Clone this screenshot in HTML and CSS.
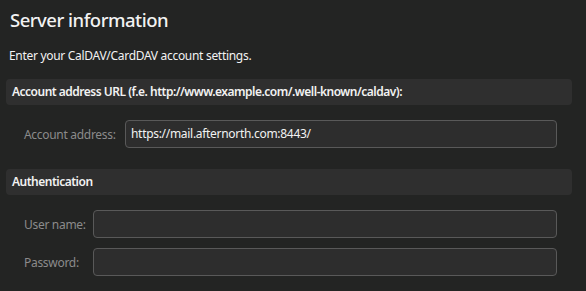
FILE: index.html
```html
<!DOCTYPE html>
<html>
<head>
  <title>Server information</title>
  <meta name="viewport" content="width=device-width,initial-scale=1.0">
  <link rel="stylesheet" href="styles.css">
</head>
<body>

  <div class="page">
    <h1 class="title">Server information</h1>
    <p class="intro">Enter your CalDAV/CardDAV account settings.</p>

    <div class="section">
      <div class="section-head">Account address URL (f.e. http://www.example.com/.well-known/caldav):</div>
      <div class="form url-form">
        <label class="label">Account address:</label>
        <div class="input">https://mail.afternorth.com:8443/</div>
      </div>
    </div>

    <div class="section">
      <div class="section-head">Authentication</div>
      <div class="form auth-form">
        <label class="label">User name:</label>
        <div class="input"></div>
        <label class="label">Password:</label>
        <div class="input"></div>
      </div>
    </div>
  </div>

</body>
</html>
```

FILE: styles.css
```css
  body{
    margin: 0;
    background-color: #232423;
    color: #f2f2f2;
    font-family: 'Noto Sans', 'Open Sans', sans-serif;
    letter-spacing: -0.3px;
  }

  .page{
    padding: 0 14px 0 6px;
  }

  .title{
    margin: 0;
    padding: 6px 0 0 4px;
    font-size: 18.5px;
    font-weight: 500;
    line-height: 28px;
    letter-spacing: -0.5px;
  }

  .intro{
    margin: 14px 0 0 3px;
    font-size: 12px;
    line-height: 16px;
  }

  .section-head{
    margin-top: 15px;
    height: 26px;
    line-height: 26px;
    padding-left: 6px;
    border-radius: 4px;
    background-color: #2f2f2f;
    font-size: 12px;
    font-weight: 600;
    letter-spacing: -0.5px;
  }

  .form{
    display: grid;
    column-gap: 10px;
    row-gap: 10px;
    align-items: center;
    padding: 15px 15px 0 18px;
  }

  .url-form{
    grid-template-columns: 91px 1fr;
  }

  .auth-form{
    grid-template-columns: 59px 1fr;
  }

  .section + .section .section-head{
    margin-top: 21px;
  }

  .label{
    color: #8b8b8b;
    font-size: 12px;
    white-space: nowrap;
  }

  .input{
    box-sizing: border-box;
    height: 28px;
    line-height: 26px;
    padding-left: 5px;
    border: 1px solid #595959;
    border-radius: 4px;
    background-color: #2d2d2d;
    font-size: 12px;
  }
```
